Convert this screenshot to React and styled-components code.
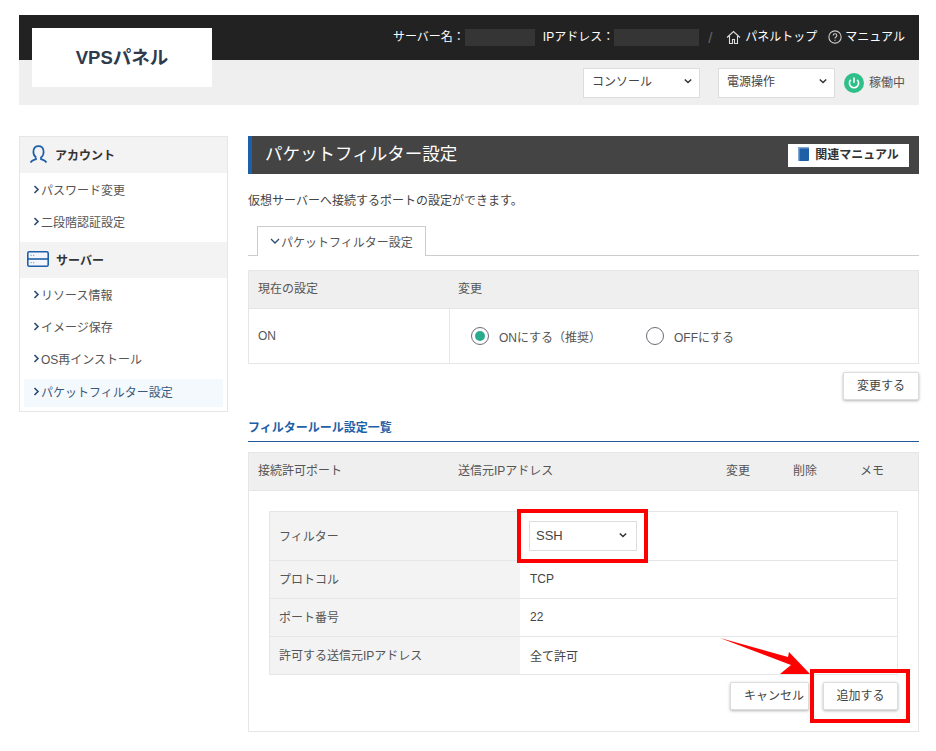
import React from 'react';
import styled, { createGlobalStyle } from 'styled-components';

const GlobalStyle = createGlobalStyle`
	html, body {
		margin: 0;
		padding: 0;
		background: #fff;
	}
	body {
		font-family: "Liberation Sans", "Noto Sans CJK JP", sans-serif;
		font-size: 12px;
		color: #444;
	}
	*, *::before, *::after {
		box-sizing: border-box;
	}
`;

const Page = styled.div`
	width: 936px;
	height: 751px;
	padding: 15px 17px 0 19px;
	overflow: hidden;
`;

const Header = styled.header`
	position: relative;
	height: 90px;
	margin-bottom: 31px;
`;

const Logo = styled.div`
	position: absolute;
	left: 13px;
	top: 13px;
	width: 180px;
	height: 59px;
	background: #fff;
	display: flex;
	align-items: center;
	justify-content: center;
	padding-bottom: 3px;
	font-size: 18.5px;
	font-weight: 700;
	color: #2f3a4f;
`;

const TopBar = styled.div`
	height: 45px;
	background: #222;
	color: #fff;
	display: flex;
	align-items: center;
	justify-content: flex-end;
	padding: 0 14px 1px 0;
	font-size: 12px;
	line-height: 1;
`;

const Redacted = styled.span`
	display: block;
	width: ${(props) => props.$w}px;
	height: 17px;
	margin-right: ${(props) => props.$mr || 0}px;
	background: #353535;
`;

const Slash = styled.span`
	color: #666;
	font-size: 15px;
	margin: 0 14px 0 9px;
`;

const TopLink = styled.span`
	display: flex;
	align-items: center;
	gap: ${(props) => props.$gap}px;
	margin-left: ${(props) => props.$ml || 0}px;
`;

const SubBar = styled.div`
	height: 45px;
	background: #efefef;
	display: flex;
	align-items: center;
	justify-content: flex-end;
	padding-right: 14px;
`;

const SelectBox = styled.div`
	width: ${(props) => props.$w}px;
	height: 30px;
	background: #fff;
	border: 1px solid #ddd;
	margin-right: ${(props) => props.$mr || 0}px;
	display: flex;
	align-items: center;
	justify-content: space-between;
	padding: ${(props) => props.$pad};
	font-size: ${(props) => props.$size || 12}px;
	color: #444;
`;

const Status = styled.div`
	display: flex;
	align-items: center;
	gap: 5px;
	font-size: 12px;
	color: #555;
`;

const StatusText = styled.span`
	padding-bottom: 2px;
`;

const Columns = styled.div`
	display: flex;
	align-items: flex-start;
	gap: 20px;
`;

const Side = styled.nav`
	width: 209px;
	height: 276px;
	border: 1px solid #e6e6e6;
`;

const SideHead = styled.div`
	height: 36px;
	background: #f3f3f3;
	display: flex;
	align-items: center;
	font-size: 12px;
	font-weight: 700;
	color: #333;
	padding: 0 0 2px ${(props) => props.$pl}px;
	gap: 7px;
`;

const SideList = styled.div`
	display: flex;
	flex-direction: column;
	padding: ${(props) => props.$pad};
`;

const SideItem = styled.div`
	height: ${(props) => (props.$active ? 28 : 32)}px;
	margin-top: ${(props) => (props.$active ? 4 : 0)}px;
	background: ${(props) => (props.$active ? '#f4f9fe' : 'transparent')};
	display: flex;
	align-items: center;
	gap: 1px;
	padding: 0 0 ${(props) => (props.$active ? 3 : 2)}px 9px;
	font-size: 12px;
	color: ${(props) => (props.$active ? '#3b5a78' : '#555')};
`;

const Main = styled.main`
	width: 671px;
`;

const TitleBar = styled.div`
	height: 38px;
	background: #444;
	border-left: 4px solid #1f5fa8;
	display: flex;
	align-items: center;
	justify-content: space-between;
	padding: 0 10px 0 13px;
`;

const Title = styled.h1`
	margin: 0 0 5px;
	font-size: 17.5px;
	font-weight: 400;
	color: #fff;
`;

const ManualButton = styled.span`
	width: 121px;
	height: 23px;
	background: #fff;
	display: flex;
	align-items: center;
	justify-content: center;
	gap: 6px;
	padding-bottom: 3px;
	font-size: 12px;
	font-weight: 700;
	color: #333;
`;

const Lead = styled.p`
	margin: 0;
	padding-top: 18px;
	height: 52px;
	line-height: 19px;
	font-size: 12px;
	color: #444;
`;

const TabRow = styled.div`
	height: 30px;
	border-bottom: 1px solid #ccc;
	padding-left: 9px;
	margin-bottom: 14px;
`;

const Tab = styled.div`
	width: 169px;
	height: 30px;
	background: #fff;
	border: 1px solid #ccc;
	border-bottom: 0;
	display: flex;
	align-items: center;
	justify-content: center;
	gap: 1px;
	padding-bottom: 1px;
	font-size: 12px;
	color: #555;
`;

const Panel = styled.div`
	border: 1px solid #e6e6e6;
`;

const PanelHead = styled.div`
	height: 38px;
	background: #efefef;
	border-bottom: 1px solid #e6e6e6;
	display: grid;
	grid-template-columns: ${(props) => props.$cols};
	align-items: center;
	padding: 0 0 4px 9px;
	font-size: 12px;
	color: #555;
`;

const SettingRow = styled.div`
	height: 54px;
	display: grid;
	grid-template-columns: 201px 1fr;
	align-items: stretch;
	font-size: 12px;
	color: #555;
`;

const CurrentCell = styled.div`
	display: flex;
	align-items: center;
	padding-left: 9px;
	border-right: 1px solid #e6e6e6;
`;

const RadioCell = styled.div`
	display: flex;
	align-items: center;
	padding-left: 21px;
`;

const RadioOption = styled.label`
	display: flex;
	align-items: center;
	gap: 10px;
	width: 175px;
`;

const Radio = styled.span`
	width: 18px;
	height: 18px;
	border-radius: 50%;
	border: 1px solid #6b6b78;
	display: flex;
	align-items: center;
	justify-content: center;
	&::after {
		content: '';
		display: ${(props) => (props.$on ? 'block' : 'none')};
		width: 10px;
		height: 10px;
		border-radius: 50%;
		background: #2bab8e;
	}
`;

const Actions = styled.div`
	display: flex;
	justify-content: flex-end;
	gap: ${(props) => props.$gap || 0}px;
	padding: ${(props) => props.$pad};
`;

const Button = styled.button`
	width: ${(props) => props.$w}px;
	height: 28px;
	padding: 0 0 4px ${(props) => props.$pl || 0}px;
	background: #fff;
	border: 1px solid #ddd;
	border-radius: 2px;
	box-shadow: 0 1px 3px rgba(0, 0, 0, 0.3);
	font: inherit;
	font-size: 12px;
	color: #444;
`;

const SectionHead = styled.h2`
	margin: 18px 0 10px;
	height: 24px;
	padding-top: 2px;
	line-height: 16px;
	border-bottom: 1px solid #255a96;
	font-size: 12px;
	font-weight: 700;
	color: #1f5fa8;
`;

const RuleBody = styled.div`
	position: relative;
	padding: 20px 20px 0;
	height: 240px;
`;

const FormTable = styled.div`
	border: 1px solid #e6e6e6;
	border-bottom: 0;
`;

const FormRow = styled.div`
	display: grid;
	grid-template-columns: 250px 1fr;
	height: ${(props) => props.$h}px;
	border-bottom: 1px solid #e6e6e6;
	font-size: 12px;
	color: #555;
`;

const FormLabel = styled.div`
	background: #f3f3f3;
	display: flex;
	align-items: center;
	padding: 0 0 2px 9px;
`;

const FormValue = styled.div`
	display: flex;
	align-items: center;
	padding: 0 0 1px 10px;
	color: #444;
`;

const Highlight = styled.div`
	position: relative;
	margin-left: -1px;
	&::after {
		content: '';
		position: absolute;
		left: -12px;
		top: -12px;
		width: 131px;
		height: 54px;
		border: 4px solid #f00;
		pointer-events: none;
	}
`;

const AddWrap = styled.div`
	position: relative;
	&::after {
		content: '';
		position: absolute;
		left: -13px;
		top: -13px;
		width: 100px;
		height: 54px;
		border: 4px solid #f00;
		pointer-events: none;
	}
`;

const Arrow = styled.svg`
	position: absolute;
	left: 471px;
	top: 147px;
`;

const Chevron = ({ size = 8, color = '#333', weight = 1.8 }) => (
	<svg width={size} height={size} viewBox='0 0 10 10' fill='none' stroke={color} strokeWidth={weight}>
		<path d='M1 3l4 4 4-4' />
	</svg>
);

const SideArrow = () => (
	<svg width='7' height='9' viewBox='0 0 7 9' fill='none' stroke='#2a4a70' strokeWidth='1.6'>
		<path d='M1.5 1l3.5 3.5L1.5 8' />
	</svg>
);

const menuAccount = ['パスワード変更', '二段階認証設定'];
const menuServer = ['リソース情報', 'イメージ保存', 'OS再インストール'];

const App = () => {
	return (
		<Page>
			<GlobalStyle />
			<Header>
				<TopBar>
					サーバー名：
					<Redacted $w={70} $mr={8} />
					IPアドレス：
					<Redacted $w={85} />
					<Slash>/</Slash>
					<TopLink $gap={4}>
						<svg width='15' height='15' viewBox='0 0 15 15' fill='none' stroke='#ddd' strokeWidth='1.1'>
							<path d='M1 7.5L7.5 1.5l6.5 6M3.5 6v7.5h3v-4h2v4h3V6' />
						</svg>
						パネルトップ
					</TopLink>
					<TopLink $ml={11} $gap={3}>
						<svg width='14' height='14' viewBox='0 0 13 13' fill='none' stroke='#ccc' strokeWidth='1'>
							<circle cx='6.5' cy='6.5' r='5.7' />
							<path d='M4.8 5.2c0-2.2 3.4-2.2 3.4 0 0 1.3-1.7 1.3-1.7 2.7M6.5 9v1' />
						</svg>
						マニュアル
					</TopLink>
				</TopBar>
				<SubBar>
					<SelectBox $w={117} $mr={18} $pad='0 7px 4px 8px'>
						コンソール
						<Chevron />
					</SelectBox>
					<SelectBox $w={117} $mr={9} $pad='0 7px 4px 8px'>
						電源操作
						<Chevron />
					</SelectBox>
					<Status>
						<svg width='20' height='20' viewBox='0 0 20 20' fill='none'>
							<circle cx='10' cy='10' r='10' fill='#2fc08a' />
							<path d='M6.8 6.8a4.6 4.6 0 1 0 6.4 0' stroke='#fff' strokeWidth='1.6' />
							<path d='M10 4.5v5.2' stroke='#fff' strokeWidth='1.6' />
						</svg>
						<StatusText>稼働中</StatusText>
					</Status>
				</SubBar>
				<Logo>VPSパネル</Logo>
			</Header>
			<Columns>
				<Side>
					<SideHead $pl={9}>
						<svg width='19' height='19' viewBox='0 0 19 19' fill='none' stroke='#1f5fa8' strokeWidth='1.7'>
							<path d='M7 12.5C4.8 10.8 4.2 8.6 4.4 6.3 4.7 3 6.8 1.2 9.5 1.2s4.8 1.8 5.1 5.1c.2 2.3-.4 4.5-2.6 6.2v1.6c1.8.7 4.3 1.3 5.5 3.4' />
							<path d='M7 12.5v1.6c-1.8.7-4.3 1.3-5.5 3.4' />
						</svg>
						アカウント
					</SideHead>
					<SideList $pad='1px 4px 4px'>
						{menuAccount.map((item) => (
							<SideItem key={item}>
								<SideArrow />
								{item}
							</SideItem>
						))}
					</SideList>
					<SideHead $pl={7}>
						<svg width='22' height='16' viewBox='0 0 22 16' fill='none'>
							<rect x='.8' y='.8' width='20.4' height='14.4' rx='1.5' fill='#f3f7fb' stroke='#1f5fa8' strokeWidth='1.6' />
							<path d='M1 8h20' stroke='#1f5fa8' strokeWidth='1.6' />
							<path d='M3.5 4.3h1.2M6 4.3h1.2M3.5 11.7h1.2M6 11.7h1.2' stroke='#7fa6d0' strokeWidth='1.2' />
						</svg>
						サーバー
					</SideHead>
					<SideList $pad='1px 4px 0'>
						{menuServer.map((item) => (
							<SideItem key={item}>
								<SideArrow />
								{item}
							</SideItem>
						))}
						<SideItem $active>
							<SideArrow />
							パケットフィルター設定
						</SideItem>
					</SideList>
				</Side>
				<Main>
					<TitleBar>
						<Title>パケットフィルター設定</Title>
						<ManualButton>
							<svg width='11' height='14' viewBox='0 0 11 14'>
								<rect width='11' height='14' rx='1' fill='#1f5fa8' />
								<path d='M0 0h11v1.5H1.5V14H0z' fill='#7fa6d0' />
							</svg>
							関連マニュアル
						</ManualButton>
					</TitleBar>
					<Lead>仮想サーバーへ接続するポートの設定ができます。</Lead>
					<TabRow>
						<Tab>
							<Chevron size={10} color='#2a4a70' weight={1.3} />
							パケットフィルター設定
						</Tab>
					</TabRow>
					<Panel>
						<PanelHead $cols='200px 1fr'>
							<span>現在の設定</span>
							<span>変更</span>
						</PanelHead>
						<SettingRow>
							<CurrentCell>ON</CurrentCell>
							<RadioCell>
								<RadioOption>
									<Radio $on />
									ONにする（推奨）
								</RadioOption>
								<RadioOption>
									<Radio />
									OFFにする
								</RadioOption>
							</RadioCell>
						</SettingRow>
					</Panel>
					<Actions $pad='8px 0 0'>
						<Button $w={76}>変更する</Button>
					</Actions>
					<SectionHead>フィルタールール設定一覧</SectionHead>
					<Panel>
						<PanelHead $cols='200px 268px 67px 67px 1fr'>
							<span>接続許可ポート</span>
							<span>送信元IPアドレス</span>
							<span>変更</span>
							<span>削除</span>
							<span>メモ</span>
						</PanelHead>
						<RuleBody>
							<FormTable>
								<FormRow $h={49}>
									<FormLabel>フィルター</FormLabel>
									<FormValue>
										<Highlight>
											<SelectBox $w={108} $size={13} $pad='0 9px 1px 6px'>
												SSH
												<Chevron />
											</SelectBox>
										</Highlight>
									</FormValue>
								</FormRow>
								<FormRow $h={38}>
									<FormLabel>プロトコル</FormLabel>
									<FormValue>TCP</FormValue>
								</FormRow>
								<FormRow $h={38}>
									<FormLabel>ポート番号</FormLabel>
									<FormValue>22</FormValue>
								</FormRow>
								<FormRow $h={38}>
									<FormLabel>許可する送信元IPアドレス</FormLabel>
									<FormValue>全て許可</FormValue>
								</FormRow>
							</FormTable>
							<Actions $pad='7px 0 0' $gap={14}>
								<Button $w={79} $pl={9}>キャンセル</Button>
								<AddWrap>
									<Button $w={75}>追加する</Button>
								</AddWrap>
							</Actions>
							<Arrow width='92' height='37' viewBox='0 0 92 37'>
								<path d='M0 0L68 19 69 14 90 36 60 36 71 27z' fill='#f00' />
							</Arrow>
						</RuleBody>
					</Panel>
				</Main>
			</Columns>
		</Page>
	);
};

export default App;
